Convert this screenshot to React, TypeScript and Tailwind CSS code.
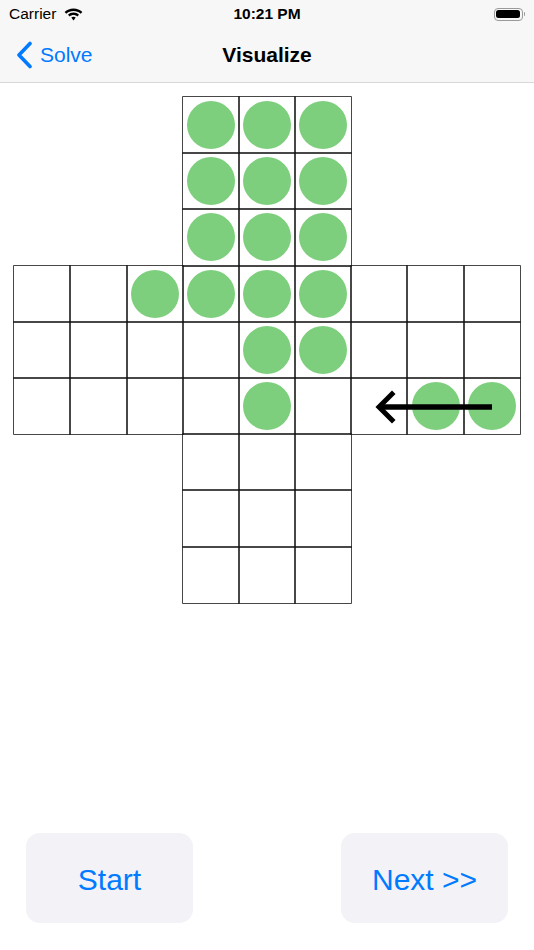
import React from "react";

const FILLED = new Set<string>([
  "0-3", "0-4", "0-5",
  "1-3", "1-4", "1-5",
  "2-3", "2-4", "2-5",
  "3-2", "3-3", "3-4", "3-5",
  "4-4", "4-5",
  "5-4", "5-7", "5-8",
]);

function onBoard(r: number, c: number) {
  const armRow = r >= 3 && r <= 5;
  const armCol = c >= 3 && c <= 5;
  return armRow || armCol;
}

function Wifi() {
  return (
    <svg width="19" height="13" viewBox="0 0 19 13" className="block">
      <path d="M9.5 0.5C6 0.5 2.9 1.8 0.6 4L2.3 5.8C4.2 4 6.7 3 9.5 3C12.3 3 14.8 4 16.7 5.8L18.4 4C16.1 1.8 13 0.5 9.5 0.5Z" fill="#000" />
      <path d="M9.5 4.6C7.4 4.6 5.4 5.4 4 6.8L5.7 8.6C6.7 7.6 8 7.1 9.5 7.1C11 7.1 12.3 7.6 13.3 8.6L15 6.8C13.6 5.4 11.6 4.6 9.5 4.6Z" fill="#000" />
      <path d="M9.5 8.7C8.6 8.7 7.9 9 7.3 9.6L9.5 12.5L11.7 9.6C11.1 9 10.4 8.7 9.5 8.7Z" fill="#000" />
    </svg>
  );
}

function Battery() {
  return (
    <div className="flex items-center">
      <div className="w-[29px] h-[13px] rounded-[4px] border border-[#9a9a9a] p-[1.5px]">
        <div className="w-full h-full rounded-[2.5px] bg-black" />
      </div>
      <div className="w-[1.5px] h-[4px] rounded-r-sm bg-[#9a9a9a] ml-[1px]" />
    </div>
  );
}

function Board() {
  const cells: React.ReactNode[] = [];
  for (let r = 0; r < 9; r++) {
    for (let c = 0; c < 9; c++) {
      const key = `${r}-${c}`;
      if (!onBoard(r, c)) {
        cells.push(<div key={key} />);
        continue;
      }
      cells.push(
        <div key={key} className="flex items-center justify-center shadow-[0_0_0_0.8px_#1a1a1a]">
          {FILLED.has(key) && <div className="w-[48px] h-[48px] rounded-full bg-[#7dcf7d]" />}
        </div>
      );
    }
  }

  return (
    <div className="relative mx-auto mt-[14px] grid grid-cols-[repeat(9,56.2px)] grid-rows-[repeat(9,56.2px)]">
      {cells}
      {/* move arrow */}
      <svg className="absolute left-0 top-0 pointer-events-none" width="506" height="506" viewBox="0 0 506 506">
        <line x1="478" y1="310" x2="366" y2="310" stroke="#000" strokeWidth="5.5" />
        <polyline points="378,297 365,310 378,323" fill="none" stroke="#000" strokeWidth="5" strokeLinecap="square" />
      </svg>
    </div>
  );
}

export default function App() {
  return (
    <div className="h-[950px] w-full flex flex-col bg-white overflow-hidden font-['Liberation_Sans',Arial,sans-serif] text-black">
      <div className="bg-[#f7f7f7] border-b border-[#d8d8d8]">
        {/* status bar */}
        <div className="h-[28px] grid grid-cols-[1fr_auto_1fr] items-center px-[9px]">
          <div className="flex items-center gap-[8px]">
            <span className="text-[15.5px]">Carrier</span>
            <Wifi />
          </div>
          <span className="text-[15.5px] font-bold">10:21 PM</span>
          <div className="flex justify-end">
            <Battery />
          </div>
        </div>
        {/* nav bar */}
        <div className="h-[54px] grid grid-cols-[1fr_auto_1fr] items-center">
          <div className="flex items-center pl-[16px] gap-[7px] text-[#007aff]">
            <svg width="17" height="28" viewBox="0 0 17 28" className="block">
              <polyline points="14,2.5 3,14 14,25.5" fill="none" stroke="#007aff" strokeWidth="3.6" strokeLinecap="round" strokeLinejoin="round" />
            </svg>
            <span className="text-[21px]">Solve</span>
          </div>
          <span className="text-[21px] font-bold">Visualize</span>
          <div />
        </div>
      </div>

      <Board />

      <div className="flex-1" />

      <div className="flex justify-between px-[26px] pb-[27px]">
        <button className="w-[167px] h-[90px] pt-[3px] rounded-[14px] bg-[#f2f2f7] text-[30px] text-[#007aff]">Start</button>
        <button className="w-[167px] h-[90px] pt-[3px] rounded-[14px] bg-[#f2f2f7] text-[30px] text-[#007aff]">Next &gt;&gt;</button>
      </div>
    </div>
  );
}
